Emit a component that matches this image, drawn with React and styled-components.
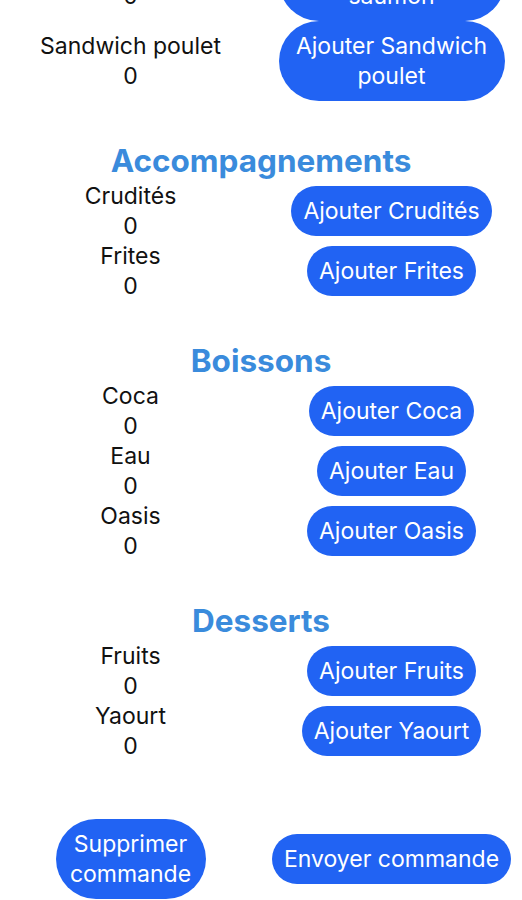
import React, { useState } from "react";
import styled, { createGlobalStyle } from "styled-components";

const GlobalStyle = createGlobalStyle`
	body {
		margin: 0;
		background: #ffffff;
		font-family: Inter, "Noto Sans", sans-serif;
		overflow: hidden;
	}
`;

const SPage = styled.div`
	width: 522px;
	/* the list is scrolled: the top of the previous item is above the window */
	margin-top: -59px;
	display: flex;
	flex-direction: column;
`;

const SSection = styled.section`
	display: flex;
	flex-direction: column;
	margin-top: ${props => (props.first ? 0 : 40)}px;
`;

const STitle = styled.h2`
	margin: 0;
	text-align: center;
	font-size: 31.5px;
	line-height: 40px;
	font-weight: 700;
	color: #3a8bdc;
`;

const SRow = styled.div`
	display: grid;
	grid-template-columns: 1fr 1fr;
	align-items: center;
`;

const SLabel = styled.div`
	display: flex;
	flex-direction: column;
	align-items: center;
	font-size: 23px;
	line-height: 30px;
	color: #111111;
`;

const SCell = styled.div`
	display: flex;
	justify-content: center;
`;

const SButton = styled.button`
	border: 0;
	margin: 0;
	padding: 10px 12px;
	max-width: ${props => props.maxWidth || 226}px;
	background-color: #2163f3;
	color: #ffffff;
	font-family: inherit;
	font-size: 23px;
	line-height: 30px;
	border-radius: 40px;
	text-align: center;
	cursor: pointer;
`;

const SActions = styled(SRow)`
	margin-top: 58px;
`;

const menu = [
	{ name: null, items: ["Sandwich saumon", "Sandwich poulet"] },
	{ name: "Accompagnements", items: ["Crudités", "Frites"] },
	{ name: "Boissons", items: ["Coca", "Eau", "Oasis"] },
	{ name: "Desserts", items: ["Fruits", "Yaourt"] },
];

const App = () => {
	const [counts, setCounts] = useState({});

	const add = (item) => {
		setCounts({ ...counts, [item]: (counts[item] || 0) + 1 });
	};

	return (
		<SPage>
			<GlobalStyle />
			{menu.map((section, index) => (
				<SSection key={index} first={index === 0}>
					{section.name && <STitle>{section.name}</STitle>}
					{section.items.map(item => (
						<SRow key={item}>
							<SLabel>
								<span>{item}</span>
								<span>{counts[item] || 0}</span>
							</SLabel>
							<SCell>
								<SButton onClick={() => add(item)}>Ajouter {item}</SButton>
							</SCell>
						</SRow>
					))}
				</SSection>
			))}
			<SActions>
				<SCell>
					<SButton maxWidth={150} onClick={() => setCounts({})}>Supprimer commande</SButton>
				</SCell>
				<SCell>
					<SButton maxWidth={260}>Envoyer commande</SButton>
				</SCell>
			</SActions>
		</SPage>
	);
};

export default App;
